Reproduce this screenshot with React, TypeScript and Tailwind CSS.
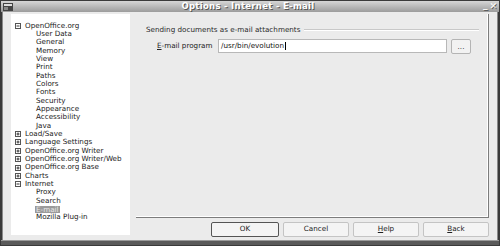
import React from 'react';

type Node = { label: string; kind: 'open' | 'closed' | 'leaf'; selected?: boolean };

const tree: Node[] = [
  { label: 'OpenOffice.org', kind: 'open' },
  { label: 'User Data', kind: 'leaf' },
  { label: 'General', kind: 'leaf' },
  { label: 'Memory', kind: 'leaf' },
  { label: 'View', kind: 'leaf' },
  { label: 'Print', kind: 'leaf' },
  { label: 'Paths', kind: 'leaf' },
  { label: 'Colors', kind: 'leaf' },
  { label: 'Fonts', kind: 'leaf' },
  { label: 'Security', kind: 'leaf' },
  { label: 'Appearance', kind: 'leaf' },
  { label: 'Accessibility', kind: 'leaf' },
  { label: 'Java', kind: 'leaf' },
  { label: 'Load/Save', kind: 'closed' },
  { label: 'Language Settings', kind: 'closed' },
  { label: 'OpenOffice.org Writer', kind: 'closed' },
  { label: 'OpenOffice.org Writer/Web', kind: 'closed' },
  { label: 'OpenOffice.org Base', kind: 'closed' },
  { label: 'Charts', kind: 'closed' },
  { label: 'Internet', kind: 'open' },
  { label: 'Proxy', kind: 'leaf' },
  { label: 'Search', kind: 'leaf' },
  { label: 'E-mail', kind: 'leaf', selected: true },
  { label: 'Mozilla Plug-in', kind: 'leaf' },
];

function Expander({ open }: { open: boolean }) {
  return (
    <svg width="6" height="6" viewBox="0 0 6 6" className="shrink-0">
      <rect x="0.5" y="0.5" width="5" height="5" fill="white" stroke="#555" strokeWidth="1" />
      <line x1="1.5" y1="3" x2="4.5" y2="3" stroke="#333" strokeWidth="1" />
      {!open && <line x1="3" y1="1.5" x2="3" y2="4.5" stroke="#333" strokeWidth="1" />}
    </svg>
  );
}

function TreeRow({ node }: { node: Node }) {
  if (node.kind === 'leaf') {
    return (
      <div className="h-[8.35px] leading-[8.35px] pl-[25px] flex items-center">
        <span
          className={
            node.selected
              ? 'bg-[#9a9a9a] text-[#e8e8e8] px-[1px] -ml-[1px] leading-[7px]'
              : 'text-[#1a1a1a]'
          }
        >
          {node.label}
        </span>
      </div>
    );
  }
  return (
    <div className="h-[8.35px] leading-[8.35px] pl-[4px] flex items-center gap-[4px] text-[#1a1a1a]">
      <Expander open={node.kind === 'open'} />
      <span>{node.label}</span>
    </div>
  );
}

function Button({ children, isDefault }: { children: React.ReactNode; isDefault?: boolean }) {
  return (
    <div
      className={`h-[15px] flex items-center justify-center rounded-[2px] bg-[#f4f4f4] text-[#222] ${
        isDefault ? 'w-[68px] border border-[#555]' : 'w-[66px] border border-[#c4c4c4]'
      }`}
    >
      {children}
    </div>
  );
}

export default function App() {
  return (
    <div className="w-[500px] h-[246px] bg-[#3a3a3a] flex flex-col overflow-hidden font-['DejaVu_Sans',sans-serif] text-[7.2px]">
      {/* Title bar */}
      <div className="h-[11px] mx-[1px] mt-[1px] bg-gradient-to-b from-[#d6d6d6] to-[#9c9c9c] flex items-center relative">
        <svg width="10" height="8" viewBox="0 0 10 8" className="ml-[2px]">
          <rect x="0" y="0" width="10" height="8" fill="#444" />
          <rect x="1" y="1" width="8" height="2" fill="#ddd" />
          <rect x="1" y="4" width="4" height="3" fill="#888" />
        </svg>
        <div className="flex-1 text-center font-bold text-white text-[8.5px] [text-shadow:1px_1px_0_#555] tracking-[0.3px]">
          Options - Internet - E-mail
        </div>
        <div className="flex items-center gap-[2px] mr-[2px] text-white font-bold text-[9px] leading-none [text-shadow:1px_1px_0_#555]">
          <span className="mt-[-2px]">_</span>
          <span>✕</span>
        </div>
      </div>

      {/* Body */}
      <div className="flex-1 mx-[2px] border-x border-[#8a8a8a] bg-[#ebebeb] flex flex-col">
        <div className="flex flex-1 pt-[2px]">
          {/* Tree */}
          <div className="ml-[8px] w-[119px] h-[221px] bg-white pt-[7.5px] text-[7.2px]">
            {tree.map((n, i) => (
              <TreeRow key={i} node={n} />
            ))}
          </div>

          {/* Right column */}
          <div className="ml-[6px] w-[353px] flex flex-col">
            <div className="h-[204px] border-r border-b border-[#7c7c7c] shadow-[inset_-1px_-1px_0_#ffffff] pt-[11px] pl-[10px] pr-[9px]">
              <div className="flex items-center text-[#2a2a2a]">
                <span className="whitespace-nowrap">Sending documents as e-mail attachments</span>
                <div className="flex-1 ml-[4px] h-[2px] border-t border-[#c8c8c8] border-b border-b-white" />
              </div>
              <div className="flex items-center mt-[3px] pl-[11px]">
                <span className="w-[61px] text-[#222] whitespace-nowrap">
                  <span className="underline">E</span>-mail program
                </span>
                <div className="w-[229px] h-[14px] bg-white border border-[#b8b8b8] flex items-center pl-[2px] text-[#111]">
                  /usr/bin/evolution
                  <span className="inline-block w-[1px] h-[8px] bg-black ml-[0.5px]" />
                </div>
                <div className="ml-[4px] w-[20px] h-[15px] border border-[#b4b4b4] bg-[#f2f2f2] rounded-[2px] flex items-center justify-center text-[#333] leading-none">
                  ...
                </div>
              </div>
            </div>
            <div className="flex justify-end gap-[4px] mt-[4px]">
              <Button isDefault>OK</Button>
              <Button>Cancel</Button>
              <Button>
                <span>
                  <span className="underline">H</span>elp
                </span>
              </Button>
              <Button>
                <span>
                  <span className="underline">B</span>ack
                </span>
              </Button>
            </div>
          </div>
        </div>
      </div>
      <div className="h-[5px] mx-[1px] mb-[1px] bg-[#5a5a5a] border-t border-[#9a9a9a]" />
    </div>
  );
}
